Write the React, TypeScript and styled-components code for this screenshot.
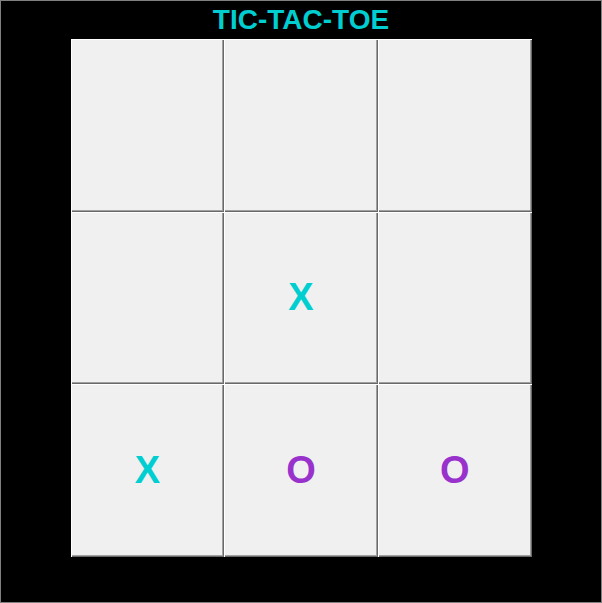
import React from "react";
import styled, { createGlobalStyle } from "styled-components";

const Global = createGlobalStyle`
  html, body { margin: 0; padding: 0; background: #000; }
  * { box-sizing: border-box; }
`;

const Frame = styled.div`
  width: 602px;
  height: 603px;
  border: 1px solid #808080;
  background: #000;
  display: flex;
  flex-direction: column;
  align-items: center;
  font-family: "Liberation Sans", Arial, sans-serif;
`;

const Title = styled.h1`
  margin: 0;
  height: 38px;
  line-height: 38px;
  font-size: 28px;
  font-weight: bold;
  color: #00ced1;
`;

const Board = styled.div`
  width: 461px;
  height: 518px;
  display: grid;
  grid-template-columns: repeat(3, 1fr);
  grid-template-rows: repeat(3, 1fr);
`;

const Cell = styled.button<{ $mark: string }>`
  border: none;
  padding: 0;
  margin: 0;
  background: #f0f0f0;
  box-shadow: inset 1px 1px 0 #ffffff, inset -1px -1px 0 #696969,
    inset -2px -2px 0 #a0a0a0;
  font-family: "Liberation Sans", Arial, sans-serif;
  font-size: 38px;
  font-weight: bold;
  color: ${(p) => (p.$mark === "X" ? "#00ced1" : "#9932cc")};
  display: flex;
  align-items: center;
  justify-content: center;
`;

const cells = ["", "", "", "", "X", "", "X", "O", "O"];

export default function App() {
  return (
    <>
      <Global />
      <Frame>
        <Title>TIC-TAC-TOE</Title>
        <Board>
          {cells.map((c, i) => (
            <Cell key={i} $mark={c}>
              {c}
            </Cell>
          ))}
        </Board>
      </Frame>
    </>
  );
}
